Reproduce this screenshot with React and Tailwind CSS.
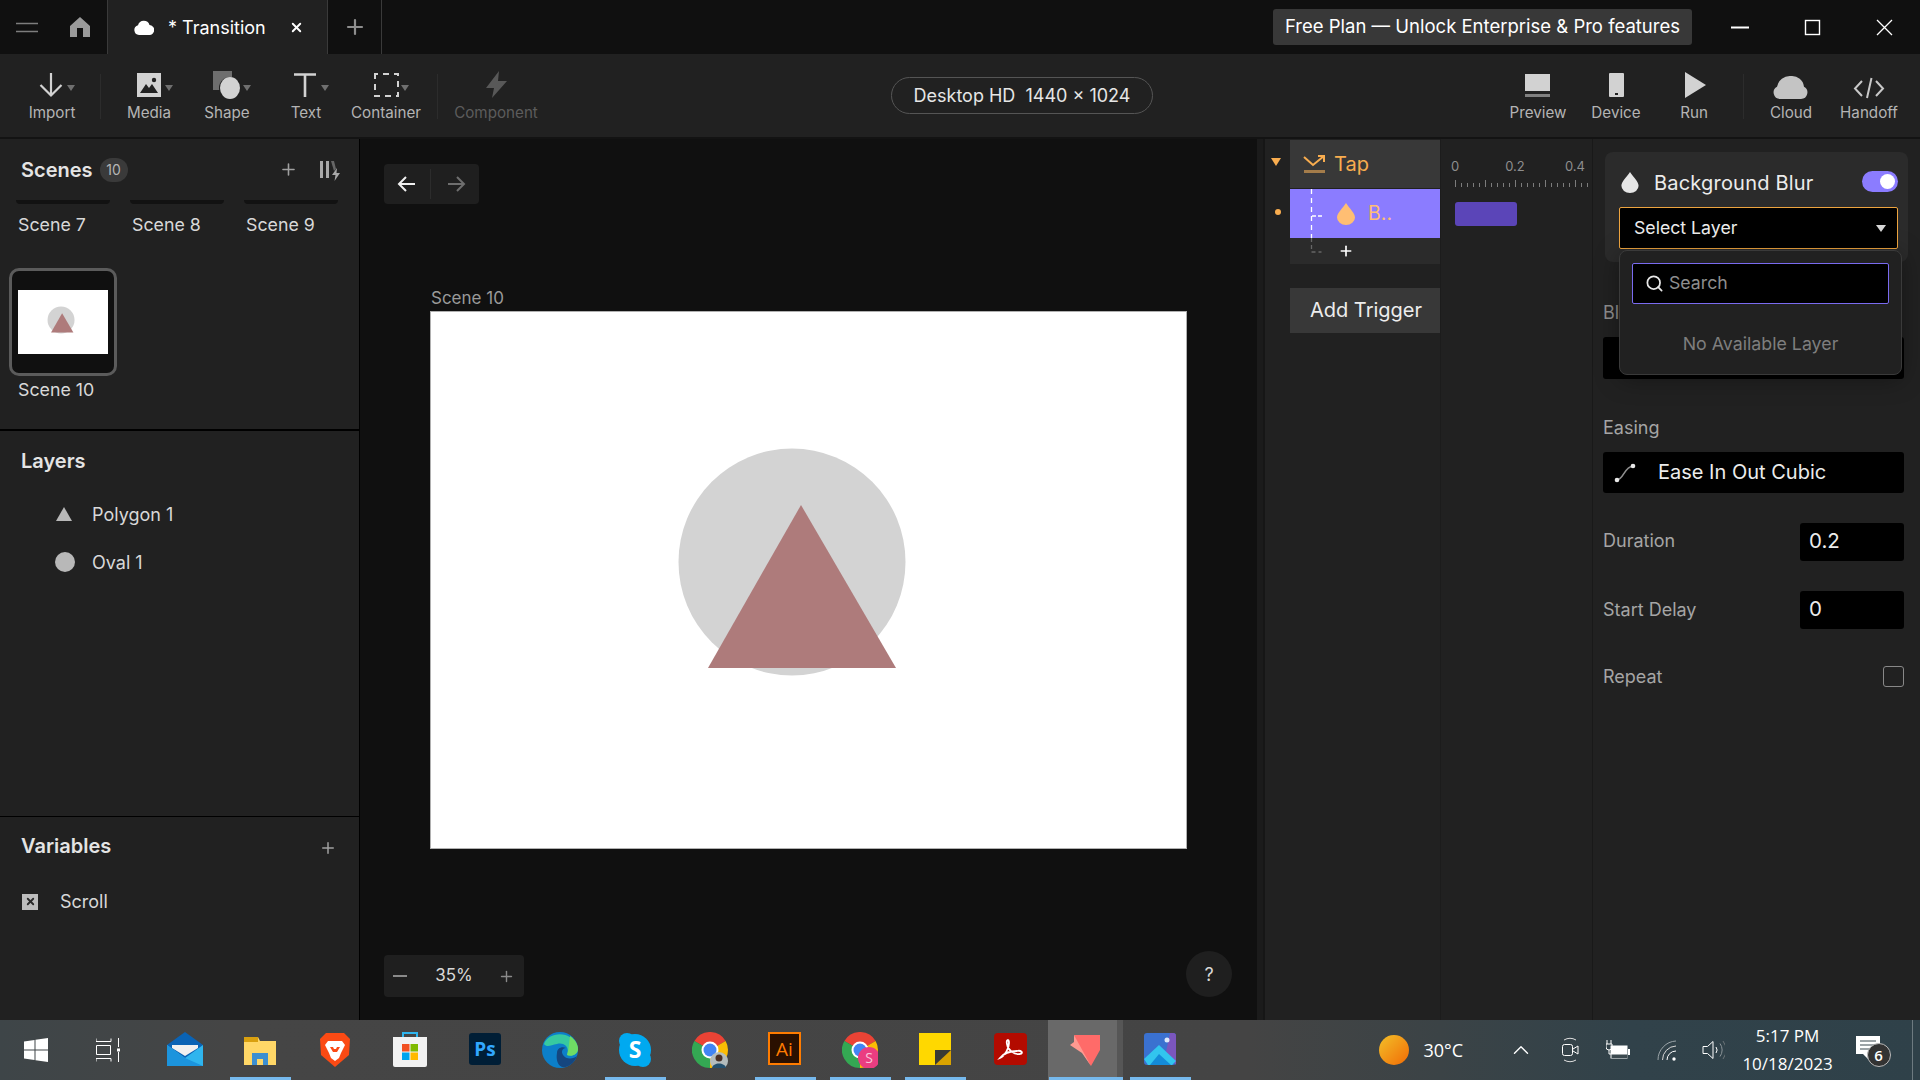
import { ChevronUp, Plus, Search, X } from "lucide-react";

function Arrow({ x, y = 16, fill = "#6f6f6f" }) {
  return <polygon points={`${x},${y} ${x + 8},${y} ${x + 4},${y + 6}`} fill={fill} />;
}

const LEFT_TOOLS = [
  {
    label: "Media",
    width: "w-[78px]",
    icon: (
      <>
        <rect x="12" y="4" width="24" height="24" fill="#d2d2d2" />
        <polygon points="15,24 21,15 24,19 27,15 33,24" fill="#222" />
        <circle cx="29" cy="11" r="2.2" fill="#222" />
        <Arrow x={40} />
      </>
    ),
  },
  {
    label: "Shape",
    width: "w-[78px]",
    icon: (
      <>
        <rect x="10" y="2" width="19" height="19" fill="#6e6e6e" />
        <circle cx="27" cy="19" r="11" fill="#212121" />
        <ellipse cx="27" cy="19" rx="10" ry="11" fill="#d2d2d2" />
        <Arrow x={40} />
      </>
    ),
  },
  {
    label: "Text",
    width: "w-[80px]",
    icon: (
      <>
        <path d="M12 5.5h22M23 5.5V28" stroke="#d2d2d2" strokeWidth="2.6" fill="none" />
        <Arrow x={39} />
      </>
    ),
  },
  {
    label: "Container",
    width: "w-[80px]",
    icon: (
      <>
        <rect x="13" y="5" width="23" height="22" fill="none" stroke="#d2d2d2" strokeWidth="2" strokeDasharray="6 5" strokeDashoffset="3" />
        <Arrow x={39} />
      </>
    ),
  },
];

const RIGHT_TOOLS = [
  {
    label: "Preview",
    icon: (
      <>
        <rect x="11" y="5" width="25" height="17" fill="#d2d2d2" />
        <rect x="11" y="25" width="25" height="3" fill="#808080" />
      </>
    ),
  },
  {
    label: "Device",
    icon: (
      <>
        <rect x="17" y="4" width="15" height="24" rx="1" fill="#d2d2d2" />
        <rect x="23" y="24" width="3" height="2" fill="#222" />
      </>
    ),
  },
  {
    label: "Run",
    icon: <polygon points="15,3 36,16 15,29" fill="#d2d2d2" />,
  },
];

function Tool({ label, width = "w-[78px]", muted = false, children }) {
  return (
    <div className={`flex flex-col items-center ${width}`}>
      <svg width="48" height="32" viewBox="0 0 48 32">
        {children}
      </svg>
      <span className={`mt-[2px] whitespace-nowrap text-[15.2px] leading-[20px] ${muted ? "text-[#5c5c5c]" : "text-[#b4b4b4]"}`}>{label}</span>
    </div>
  );
}

function TitleBar() {
  return (
    <header className="flex h-[54px] shrink-0 items-center bg-[#101010]">
      <svg width="107" height="54" viewBox="0 0 107 54" className="shrink-0">
        <path d="M16 23.5h22M16 31.5h22" stroke="#7d7d7d" strokeWidth="1.6" />
        <path d="M80 17l10 9v11h-7v-9h-6v9h-7V26z" fill="#9a9a9a" />
      </svg>
      <div className="flex h-full w-[221px] items-center border-x border-[#3a3a3a] bg-[#212121] pl-[26px]">
        <svg width="20" height="15" viewBox="0 0 20 15">
          <path d="M5 15a5 5 0 0 1-1-9.8A6 6 0 0 1 15.5 5 5 5 0 0 1 15 15z" fill="#fff" />
        </svg>
        <span className="ml-[14px] whitespace-nowrap text-[18px] text-white">* Transition</span>
        <X size={15} strokeWidth={3} className="ml-[23px] text-white" />
      </div>
      <div className="flex h-full w-[54px] items-center justify-center border-r border-[#3a3a3a]">
        <Plus size={24} strokeWidth={2.2} className="text-[#8d8d8d]" />
      </div>
      <div className="ml-auto flex h-[36px] w-[419px] items-center justify-center whitespace-nowrap rounded-[3px] bg-[#383838] text-[18.5px] text-white">
        Free Plan — Unlock Enterprise &amp; Pro features
      </div>
      <svg width="228" height="54" viewBox="0 0 228 54" className="shrink-0">
        <path d="M39 27.5h18" stroke="#fff" strokeWidth="2" />
        <rect x="113.5" y="20.5" width="14" height="14" fill="none" stroke="#fff" strokeWidth="1.4" />
        <path d="M185 20l15 15M200 20l-15 15" stroke="#fff" strokeWidth="1.3" />
      </svg>
    </header>
  );
}

function Toolbar() {
  return (
    <div className="flex h-[85px] shrink-0 items-start border-b-2 border-[#131313] bg-[#212121] pt-[15px] font-normal">
      <div className="ml-[4px] flex w-[96px] justify-center">
        <Tool label="Import" width="w-[48px]">
          <path d="M23 4v22M12.5 16L23 26.5 33.5 16" stroke="#d2d2d2" strokeWidth="2.2" fill="none" />
          <Arrow x={39} />
        </Tool>
      </div>
      <div className="mt-[5px] h-[45px] w-px bg-[#2c2c2c]" />
      <div className="ml-[9px] flex">
        {LEFT_TOOLS.map((tool) => (
          <Tool key={tool.label} label={tool.label} width={tool.width}>
            {tool.icon}
          </Tool>
        ))}
      </div>
      <div className="ml-[11px] mt-[5px] h-[45px] w-px bg-[#2c2c2c]" />
      <Tool label="Component" width="w-[116px]" muted>
        <polygon points="27,2 14,19 22,19 20,29 35,12 26,12" fill="#585858" />
      </Tool>

      <div className="ml-[337px] mt-[8px] flex h-[37px] w-[262px] items-center justify-center whitespace-nowrap rounded-full border border-[#555] text-[18px] text-[#e6e6e6]">
        Desktop HD&nbsp;&nbsp;1440 × 1024
      </div>

      <div className="ml-auto flex pr-[12px]">
        {RIGHT_TOOLS.map((tool) => (
          <Tool key={tool.label} label={tool.label}>
            {tool.icon}
          </Tool>
        ))}
        <div className="ml-[10px] mr-[8px] mt-[5px] h-[45px] w-px bg-[#2c2c2c]" />
        <Tool label="Cloud">
          <path d="M13 30a6.500 6.500 0 0 1-3-12.200A13 13 0 0 1 24 7a12 12 0 0 1 13 10.800A6.500 6.500 0 0 1 34 30z" fill="#c4c4c4" />
        </Tool>
        <Tool label="Handoff">
          <path d="M17 12l-7 7.5 7 7.5M31 12l7 7.5-7 7.5M26.500 9l-4.500 20" stroke="#c8c8c8" strokeWidth="2" fill="none" />
        </Tool>
      </div>
    </div>
  );
}

function Art({ className }) {
  return (
    <svg viewBox="0 0 757 537" className={className}>
      <circle cx="362" cy="251" r="113.500" fill="#d3d3d3" />
      <polygon points="371,194 278,357 466,357" fill="#ae7b7b" />
    </svg>
  );
}

function ScenesPanel() {
  return (
    <section className="h-[292px] border-b-2 border-black">
      <div className="flex h-[61px] items-center pl-[21px] pr-[18px]">
        <h2 className="text-[20px] font-semibold text-[#e4e4e4]">Scenes</h2>
        <span className="ml-[7px] flex h-[24px] w-[28px] items-center justify-center rounded-full bg-[#3a3a3a] text-[14px] text-[#b5b5b5]">10</span>
        <Plus size={19} strokeWidth={2} className="ml-auto text-[#a0a0a0]" />
        <svg width="22" height="20" viewBox="0 0 22 20" className="ml-[21px] mt-[3px]">
          <path d="M1 0h3v17H1zM7 0h3v17H7z" fill="#a8a8a8" />
          <path d="M12 0l3 0 2 8-2 2z" fill="#666" />
          <polygon points="18,7 13,14 16.500,14 15.500,20 21,12 17.500,12" fill="#a8a8a8" />
        </svg>
      </div>
      <div className="grid w-[358px] grid-cols-3 pl-[16px]">
        {["Scene 7", "Scene 8", "Scene 9"].map((name) => (
          <div key={name}>
            <div className="h-[4px] w-[94px] rounded-b-lg bg-[#121212]" />
            <p className="ml-[2px] mt-[9px] text-[17.8px] leading-[24px] text-[#d8d8d8]">{name}</p>
          </div>
        ))}
      </div>
      <div className="ml-[9px] mt-[31px] flex h-[108px] w-[108px] flex-col justify-center rounded-[10px] border-[3px] border-[#5b5b5b] bg-[#101010] px-[6px]">
        <Art className="h-[64px] w-[90px] bg-white" />
      </div>
      <p className="ml-[18px] mt-[2px] text-[17.8px] leading-[24px] text-[#d8d8d8]">Scene 10</p>
    </section>
  );
}

function LayersPanel() {
  return (
    <section className="h-[386px] border-b border-black pl-[21px]">
      <h2 className="pt-[17px] text-[20px] font-semibold leading-[26px] text-[#e4e4e4]">Layers</h2>
      <div className="mt-[26px] flex h-[28px] items-center">
        <svg width="20" height="16" viewBox="0 0 20 16" className="ml-[33px]">
          <polygon points="10,1 18,15 2,15" fill="#b8b8b8" />
        </svg>
        <span className="ml-[18px] text-[18px] text-[#d8d8d8]">Polygon 1</span>
      </div>
      <div className="mt-[20px] flex h-[28px] items-center">
        <span className="ml-[34px] h-[20px] w-[20px] rounded-full bg-[#b8b8b8]" />
        <span className="ml-[17px] text-[18px] text-[#d8d8d8]">Oval 1</span>
      </div>
    </section>
  );
}

function VariablesPanel() {
  return (
    <section className="pl-[21px] pr-[22px]">
      <div className="flex h-[58px] items-center">
        <h2 className="text-[20px] font-semibold text-[#e4e4e4]">Variables</h2>
        <Plus size={18} strokeWidth={2} className="ml-auto mt-[3px] text-[#a0a0a0]" />
      </div>
      <div className="mt-[18px] flex h-[17px] items-center">
        <span className="ml-px flex h-[16px] w-[16px] items-center justify-center bg-[#bdbdbd]">
          <X size={11} strokeWidth={4} className="text-[#2a2a2a]" />
        </span>
        <span className="ml-[22px] text-[18px] text-[#d8d8d8]">Scroll</span>
      </div>
    </section>
  );
}

function Canvas() {
  return (
    <section className="relative h-full w-[897px] shrink-0 bg-[#101010]">
      <div className="absolute left-[24px] top-[25px] flex h-[40px] w-[95px] items-center rounded-[4px] bg-[#1f1f1f]">
        <svg width="46" height="40" viewBox="0 0 46 40">
          <path d="M31 20H15M22 13l-7 7 7 7" stroke="#f0f0f0" strokeWidth="2" fill="none" />
        </svg>
        <div className="h-[30px] w-px bg-[#2c2c2c]" />
        <svg width="48" height="40" viewBox="0 0 48 40">
          <path d="M17 20h16M26 13l7 7-7 7" stroke="#6e6e6e" strokeWidth="2" fill="none" />
        </svg>
      </div>
      <span className="absolute left-[71px] top-[149px] text-[17px] leading-[20px] text-[#9a9a9a]">Scene 10</span>
      <div className="absolute left-[70px] top-[172px] h-[538px] w-[757px] bg-white outline-1 -outline-offset-1 outline-[#b0b0b0]">
        <Art className="h-[537px] w-[757px]" />
      </div>
      <div className="absolute bottom-[23px] left-[24px] flex h-[42px] w-[140px] items-center justify-between rounded-[4px] bg-[#1f1f1f] pl-[9px] pr-[9px]">
        <svg width="14" height="14" viewBox="0 0 14 14">
          <path d="M0 7h14" stroke="#8a8a8a" strokeWidth="2" />
        </svg>
        <span className="ml-[3px] text-[17px] text-[#d8d8d8]">35%</span>
        <Plus size={17} strokeWidth={2} className="text-[#8a8a8a]" />
      </div>
      <div className="absolute left-[826px] top-[812px] flex h-[46px] w-[46px] items-center justify-center rounded-full bg-[#1f1f1f] text-[18px] text-[#d8d8d8]">?</div>
    </section>
  );
}

function Drop({ color, className }) {
  return (
    <svg viewBox="0 0 18 22" className={className}>
      <path d="M9 0C6 5 0 10 0 14.500A9 7.500 0 0 0 18 14.500C18 10 12 5 9 0z" fill={color} />
    </svg>
  );
}

function Ruler() {
  const ticks = Array.from({ length: 23 }, (_, index) => index);
  return (
    <svg width="136" height="8" viewBox="0 0 136 8">
      {ticks.map((tick) => (
        <rect key={tick} x={tick * 6} y={tick % 5 === 0 ? 0 : 3} width="1" height={tick % 5 === 0 ? 7 : 4} fill="#7c7c7c" />
      ))}
    </svg>
  );
}

function Timeline() {
  return (
    <section className="flex h-full w-[335px] shrink-0 bg-[#212121]">
      <div className="w-[8px] border-r-2 border-[#161616] bg-[#1b1b1b]" />
      <div className="flex w-[25px] flex-col items-center pt-[19px]">
        <svg width="10" height="8" viewBox="0 0 10 8" className="-ml-[3px]">
          <polygon points="0,0 10,0 5,8" fill="#f9ad4f" />
        </svg>
        <span className="mt-[43px] h-[6px] w-[6px] rounded-full bg-[#f9ad4f]" />
      </div>
      <div className="w-[151px] border-r border-[#1c1c1c] pt-px">
        <div className="flex h-[48px] items-center bg-[#383838] pl-[13px] text-[20px] text-[#f9ad4f]">
          <svg width="23" height="20" viewBox="0 0 23 20">
            <path d="M1 3l9 8L21 2M15 2h6v6" stroke="#f9ad4f" strokeWidth="2" fill="none" />
            <rect x="1" y="16" width="21" height="3" fill="#a47c4a" />
          </svg>
          <span className="ml-[8px]">Tap</span>
        </div>
        <div className="mt-px flex h-[49px] items-center bg-[#8b7cff] pl-[19px] text-[19.500px] text-[#ffbe73]">
          <svg width="14" height="49" viewBox="0 0 14 49">
            <path d="M2.500 0v49" stroke="#fff" strokeWidth="1.3" strokeDasharray="5 4" />
            <path d="M3 27h10" stroke="#fff" strokeWidth="1.300" strokeDasharray="4 2" />
          </svg>
          <Drop color="#ffbe73" className="ml-[14px] h-[22px] w-[18px]" />
          <span className="ml-[13px]">B..</span>
        </div>
        <div className="flex h-[26px] items-center bg-[#2b2b2b] pl-[19px]">
          <svg width="14" height="26" viewBox="0 0 14 26">
            <path d="M2.500 0v14h10" stroke="#666" strokeWidth="1.300" strokeDasharray="4 3" fill="none" />
          </svg>
          <Plus size={16} strokeWidth={2.5} className="ml-[15px] text-white" />
        </div>
        <div className="mt-[24px] flex h-[45px] items-center justify-center bg-[#383838] pb-[2px] pl-[2px] text-[20px] text-[#ededed]">Add Trigger</div>
      </div>
      <div className="w-[150px] pl-[15px] pt-[19px]">
        <div className="-ml-[31px] flex text-center text-[13px] leading-[16px] text-[#8e8e8e]">
          <span className="w-[60px] shrink-0">0</span>
          <span className="w-[60px] shrink-0">0.2</span>
          <span className="w-[60px] shrink-0">0.4</span>
        </div>
        <div className="-ml-px mt-[6px] flex">
          <Ruler />
        </div>
        <div className="-ml-px mt-[14px] h-[24px] w-[62px] rounded-[3px] bg-[#5b45b8]" />
      </div>
    </section>
  );
}

function Properties() {
  return (
    <section className="relative h-full w-[328px] shrink-0 border-l border-[#191919] bg-[#212121] pl-[10px] pr-[16px] pt-[13px] text-[#a5a5a5]">
      <div className="ml-[2px] h-[110px] w-[303px] rounded-lg bg-[#2b2b2b] pl-[14px] pr-[10px] pt-[20px]">
        <div className="flex h-[21px] items-center">
          <Drop color="#e6e6e6" className="ml-[2px] h-[21px] w-[18px]" />
          <span className="ml-[15px] text-[20px] tracking-[0.2px] text-[#ececec]">Background Blur</span>
          <span className="-mt-[3px] ml-auto flex h-[21px] w-[36px] items-center justify-end rounded-full bg-[#8b7cff] pr-[3px]">
            <span className="h-[15px] w-[15px] rounded-full bg-white" />
          </span>
        </div>
        <div className="mt-[14px] flex h-[42px] w-[279px] items-center justify-between rounded-[2px] border border-[#eda43f] bg-black pl-[14px] pr-[11px] text-[17.700px] text-[#ececec]">
          Select Layer
          <svg width="10" height="7" viewBox="0 0 10 7">
            <polygon points="0,0 10,0 5,7" fill="#d8d8d8" />
          </svg>
        </div>
      </div>

      <p className="mt-[39px] text-[18px] leading-[24px] text-[#8e8e8e]">Blur</p>
      <div className="mt-[12px] h-[42px] w-[301px] rounded-[3px] bg-black" />

      <p className="mt-[37px] text-[18px] leading-[24px]">Easing</p>
      <div className="mt-[12px] flex h-[41px] w-[301px] items-center rounded-[3px] bg-black pl-[11px]">
        <svg width="22" height="20" viewBox="0 0 22 20">
          <path d="M3 17C10 16 10 4 19 3" stroke="#8e8e8e" strokeWidth="1.600" fill="none" />
          <circle cx="3" cy="17" r="2.300" fill="#e8e8e8" />
          <circle cx="19" cy="3" r="2.300" fill="#e8e8e8" />
        </svg>
        <span className="mb-[2px] ml-[22px] text-[20px] text-[#ececec]">Ease In Out Cubic</span>
      </div>

      <div className="mt-[30px] flex h-[38px] w-[301px] items-center justify-between text-[18px]">
        <span className="mb-[3px]">Duration</span>
        <span className="flex h-full w-[104px] items-center rounded-[3px] bg-black pb-[2px] pl-[9px] text-[20.500px] text-[#ececec]">0.2</span>
      </div>
      <div className="mt-[30px] flex h-[38px] w-[301px] items-center justify-between text-[18px]">
        <span className="mb-[2px]">Start Delay</span>
        <span className="flex h-full w-[104px] items-center rounded-[3px] bg-black pb-[2px] pl-[9px] text-[20.500px] text-[#ececec]">0</span>
      </div>
      <div className="mt-[37px] flex h-[21px] w-[301px] items-center justify-between text-[18px]">
        Repeat
        <span className="h-[21px] w-[21px] rounded-[3px] border border-[#888]" />
      </div>

      <div className="absolute left-[26px] top-[111px] h-[125px] w-[283px] rounded-lg border border-[#3a3a3a] bg-[#212121] px-[12px] pt-[12px] shadow-[0_4px_24px_rgba(0,0,0,0.35)]">
        <div className="flex h-[41px] items-center rounded-[2px] border border-[#7a6bf0] bg-black pl-[12px]">
          <Search size={19} strokeWidth={2.2} className="text-[#e8e8e8]" />
          <span className="ml-[5px] text-[17.700px] text-[#8e8e8e]">Search</span>
        </div>
        <p className="mt-[28px] text-center text-[17.800px] leading-[24px] text-[#7e7e7e]">No Available Layer</p>
      </div>
    </section>
  );
}

function ChromeLogo() {
  return (
    <>
      <path d="M18 18L2.400 9A18 18 0 0 1 33.600 9z" fill="#ea4335" />
      <path d="M18 18h18A18 18 0 0 1 18 36z" fill="#fbbc05" />
      <path d="M33.600 9A18 18 0 0 1 36 18H18z" fill="#fbbc05" />
      <path d="M18 36A18 18 0 0 1 2.400 9L18 18z" fill="#34a853" />
      <circle cx="18" cy="18" r="8.500" fill="#fff" />
      <circle cx="18" cy="18" r="6.500" fill="#4285f4" />
    </>
  );
}

const TASKBAR_APPS = [
  {
    id: "mail",
    on: false,
    icon: (
      <>
        <polygon points="0,13 18,0 36,13 36,34 0,34" fill="#0a63b5" />
        <polygon points="5,13 31,13 31,16 18,24 5,16" fill="#f0f0f0" />
        <polygon points="0,13 18,26 36,13 36,34 0,34" fill="#2fb5ee" />
        <polygon points="0,13 18,26 36,34 0,34" fill="#1c94dd" />
      </>
    ),
  },
  {
    id: "files",
    on: true,
    icon: (
      <>
        <path d="M2 5h14l2 4h16v24H2z" fill="#ffd767" />
        <path d="M2 5h14v5H2z" fill="#d9a00f" />
        <path d="M10 33V21h16v12h-5v-6h-6v6z" fill="#3d8fd1" />
      </>
    ),
  },
  {
    id: "brave",
    on: false,
    icon: (
      <>
        <path d="M9 1h18l6 6-1 16-14 12L4 23 3 7z" fill="#fb4a14" />
        <path d="M11 9h14l3 4-4 8-2 5-4 3-4-3-2-5-4-8z" fill="#fff" />
        <path d="M13 15h3l1 2h2l1-2h3l-3 5h-4z" fill="#fb4a14" />
      </>
    ),
  },
  {
    id: "store",
    on: false,
    icon: (
      <>
        <path d="M11 5V1h14v4" stroke="#2fb5ee" strokeWidth="2" fill="none" />
        <path d="M1 5h34v28a2 2 0 0 1-2 2H3a2 2 0 0 1-2-2z" fill="#f2f2f2" />
        <rect x="10" y="12" width="7.500" height="7.500" fill="#f25022" />
        <rect x="18.500" y="12" width="7.500" height="7.500" fill="#7fba00" />
        <rect x="10" y="20.500" width="7.500" height="7.500" fill="#00a4ef" />
        <rect x="18.500" y="20.500" width="7.500" height="7.500" fill="#ffb900" />
      </>
    ),
  },
  {
    id: "photoshop",
    on: false,
    icon: (
      <>
        <rect x="2" y="1" width="32" height="32" rx="3" fill="#001e36" />
        <text x="18" y="24" textAnchor="middle" fontFamily="Open Sans, sans-serif" fontWeight="700" fontSize="19" fill="#31a8ff">Ps</text>
      </>
    ),
  },
  {
    id: "edge",
    on: false,
    icon: (
      <>
        <circle cx="18" cy="18" r="18" fill="#0c7fc9" />
        <path d="M2 12C6 0 30-3 36 16c0 6-6 9-11 7 3-8-3-13-10-11-6 1-10 4-13 0z" fill="#37c9a0" />
        <path d="M28 4c6 4 8 9 8 13 0 6-7 8-11 6 2-6 2-13 3-19z" fill="#6fdc64" />
        <path d="M15 21c0-5 5-7 9-5-4 0-5 4-3 7 3 5 11 4 14 1-3 8-10 12-15 11-5-2-6-9-5-14z" fill="#15467f" />
      </>
    ),
  },
  {
    id: "skype",
    on: true,
    icon: (
      <>
        <circle cx="18" cy="18" r="16" fill="#00a9f0" />
        <circle cx="10" cy="9" r="8" fill="#00a9f0" />
        <circle cx="26" cy="27" r="8" fill="#00a9f0" />
        <text x="18" y="26" textAnchor="middle" fontFamily="Open Sans, sans-serif" fontWeight="700" fontSize="23" fill="#fff">S</text>
      </>
    ),
  },
  {
    id: "chrome",
    on: false,
    icon: (
      <>
        <ChromeLogo />
        <circle cx="27" cy="29" r="9" fill="#b4bcbc" />
        <circle cx="27" cy="26" r="3.500" fill="#4a3026" />
        <path d="M20 36c1-6 13-6 14 0z" fill="#24506e" />
      </>
    ),
  },
  {
    id: "illustrator",
    on: true,
    icon: (
      <>
        <rect x="2" y="1" width="31" height="31" fill="#2a1000" stroke="#ff7c00" strokeWidth="2" />
        <text x="17.500" y="24" textAnchor="middle" fontFamily="Open Sans, sans-serif" fontSize="19" fill="#ff7c00">Ai</text>
      </>
    ),
  },
  {
    id: "chrome-2",
    on: true,
    icon: (
      <>
        <ChromeLogo />
        <circle cx="27" cy="26" r="11" fill="#ea3d81" />
        <text x="27" y="31" textAnchor="middle" fontFamily="Open Sans, sans-serif" fontSize="14" fill="#f9c7da">S</text>
      </>
    ),
  },
  {
    id: "sticky",
    on: true,
    icon: (
      <>
        <rect x="2" y="1" width="32" height="32" fill="#ffd800" />
        <polygon points="18,33 34,33 34,18 20,18" fill="#d9a300" />
        <polygon points="18,18 34,18 18,33" fill="#3a3a34" />
      </>
    ),
  },
  {
    id: "acrobat",
    on: false,
    icon: (
      <>
        <rect x="2" y="1" width="33" height="32" rx="4" fill="#b30b00" />
        <path d="M8 26c5-2 9-10 9-15 0-5-3-3-2 1 1 6 7 11 13 10 4-1 1-4-3-3-6 0-13 2-17 7z" stroke="#fff" strokeWidth="1.800" fill="none" />
      </>
    ),
  },
  {
    id: "protopie",
    on: true,
    active: true,
    icon: (
      <>
        <polygon points="8,3 34,3 34,18 25,34 12,14" fill="#ff6b69" />
        <polygon points="8,3 25,34 16,21 4,13 8,10" fill="#ff9a91" />
      </>
    ),
  },
  {
    id: "photos",
    on: true,
    icon: (
      <>
        <rect x="2" y="1" width="32" height="32" rx="3" fill="#3a71d0" />
        <path d="M28 1h3a3 3 0 0 1 3 3v29L24 20z" fill="#7b56bd" />
        <circle cx="25" cy="8" r="2.500" fill="#dde9fa" />
        <polygon points="2,27 17,13 34,29 30,33 6,33" fill="#32c5ee" />
        <polygon points="8,33 17,22 29,33" fill="#148bd8" />
      </>
    ),
  },
];

function Taskbar() {
  return (
    <footer className="flex h-[60px] shrink-0 items-center bg-[linear-gradient(90deg,#3e4548_0%,#454545_12%,#444444_65%,#3b4346_75%,#31424a_85%,#2f4149_100%)] font-['Open_Sans',sans-serif] text-white">
      <div className="flex w-[72px] justify-center">
        <svg width="24" height="24" viewBox="0 0 24 24">
          <path d="M0 3.500l10.500-1.500v9.500H0zM11.500 1.800L24 0v11.500H11.500zM0 12.500h10.500V22L0 20.500zM11.500 12.500H24V24l-12.500-1.800z" fill="#fff" />
        </svg>
      </div>
      <div className="flex w-[72px] justify-center">
        <svg width="24" height="24" viewBox="0 0 24 24">
          <path d="M0 3.500h15M0 .5v3M15 .5v3M.5 7.500h14v9H.5zM0 20.500h15M0 20.500v3M15 20.500v3M22.500 0v9M22.500 14v10" stroke="#fff" strokeWidth="1" fill="none" />
          <rect x="21" y="10.500" width="3" height="3" fill="#fff" />
        </svg>
      </div>
      <div className="ml-[3.500px] flex">
        {TASKBAR_APPS.map((app) => (
          <div
            key={app.id}
            className={`relative flex h-[60px] w-[75px] items-center justify-center ${app.active ? "border-r-[6px] border-[#565656] bg-[#696969] pl-[3px]" : ""}`}
          >
            <svg width="36" height="36" viewBox="0 0 36 36">
              {app.icon}
            </svg>
            {app.on ? (
              <span className={`absolute bottom-0 h-[3px] bg-[#76b9ed] ${app.active ? "-right-[6px] left-[1px]" : "left-[7px] w-[61px]"}`} />
            ) : null}
          </div>
        ))}
      </div>

      <span className="ml-[181px] h-[30px] w-[30px] rounded-full bg-[linear-gradient(135deg,#f2c029,#f26b05)]" />
      <span className="ml-[15px] w-[43px] whitespace-nowrap text-[18px]">30°C</span>
      <ChevronUp size={26} strokeWidth={1.3} className="ml-[41px] text-white" />
      <svg width="18" height="26" viewBox="0 0 18 26" className="ml-[27px]">
        <path d="M3 3a12 12 0 0 1 12 0M3 23a12 12 0 0 0 12 0" stroke="#ddd" fill="none" />
        <rect x="1.500" y="7.500" width="10" height="11" rx="2" fill="none" stroke="#fff" />
        <path d="M12 12l5-3v8l-5-3" fill="none" stroke="#fff" />
      </svg>
      <svg width="24" height="20" viewBox="0 0 24 20" className="ml-[27px]">
        <path d="M1 0v4M5 0v4M0 4h6v3a3 3 0 0 1-6 0zM3 10v4h2" stroke="#fff" fill="none" />
        <rect x="5" y="6" width="16" height="12" fill="#fff" stroke="#fff" />
        <rect x="5.500" y="14.500" width="16" height="3.500" fill="#3c4a50" />
        <rect x="22" y="9" width="2" height="6" fill="#fff" />
      </svg>
      <svg width="20" height="22" viewBox="0 0 20 22" className="ml-[27px]">
        <path d="M1 21A19 19 0 0 1 19 2" stroke="#9aa4a8" fill="none" />
        <path d="M5.500 21A14 14 0 0 1 19 7" stroke="#d8d8d8" fill="none" />
        <path d="M10 21a9 9 0 0 1 9-9" stroke="#fff" fill="none" />
        <circle cx="17" cy="20" r="1.700" fill="#fff" />
      </svg>
      <svg width="23" height="20" viewBox="0 0 23 20" className="ml-[25px]">
        <path d="M1 6.500h4.500L11 1.500v17l-5.500-5H1z" stroke="#fff" fill="none" />
        <path d="M14 7a5 5 0 0 1 0 6" stroke="#fff" fill="none" />
        <path d="M18 3.500a11 11 0 0 1 0 13" stroke="#8c9599" fill="none" />
        <path d="M21 1a15 15 0 0 1 0 18" stroke="#6c7579" fill="none" />
      </svg>
      <div className="ml-[3px] flex w-[120px] flex-col items-center text-[17px] leading-[28px]">
        <span>5:17 PM</span>
        <span>10/18/2023</span>
      </div>
      <div className="relative ml-[8px] h-[28px] w-[24px]">
        <svg width="24" height="28" viewBox="0 0 24 28">
          <path d="M0 0h24v18H15l-2 6-6-6H0z" fill="#fff" />
          <path d="M4 5h16M4 9h16M4 13h10" stroke="#3c4a50" strokeWidth="1.200" />
        </svg>
        <span className="absolute -bottom-[3px] -right-[11px] flex h-[24px] w-[24px] items-center justify-center rounded-full border border-[#bbb] bg-[#333] text-[15px] font-semibold">6</span>
      </div>
      <div className="ml-auto mr-[7px] h-full w-px bg-[#6d7a80]" />
    </footer>
  );
}

export default function App() {
  return (
    <div className="flex h-[1080px] w-[1920px] flex-col overflow-hidden bg-[#101010] font-[Inter,sans-serif]">
      <TitleBar />
      <Toolbar />
      <main className="flex h-[881px] shrink-0">
        <aside className="h-full w-[360px] shrink-0 border-r border-black bg-[#212121]">
          <ScenesPanel />
          <LayersPanel />
          <VariablesPanel />
        </aside>
        <Canvas />
        <Timeline />
        <Properties />
      </main>
      <Taskbar />
    </div>
  );
}
